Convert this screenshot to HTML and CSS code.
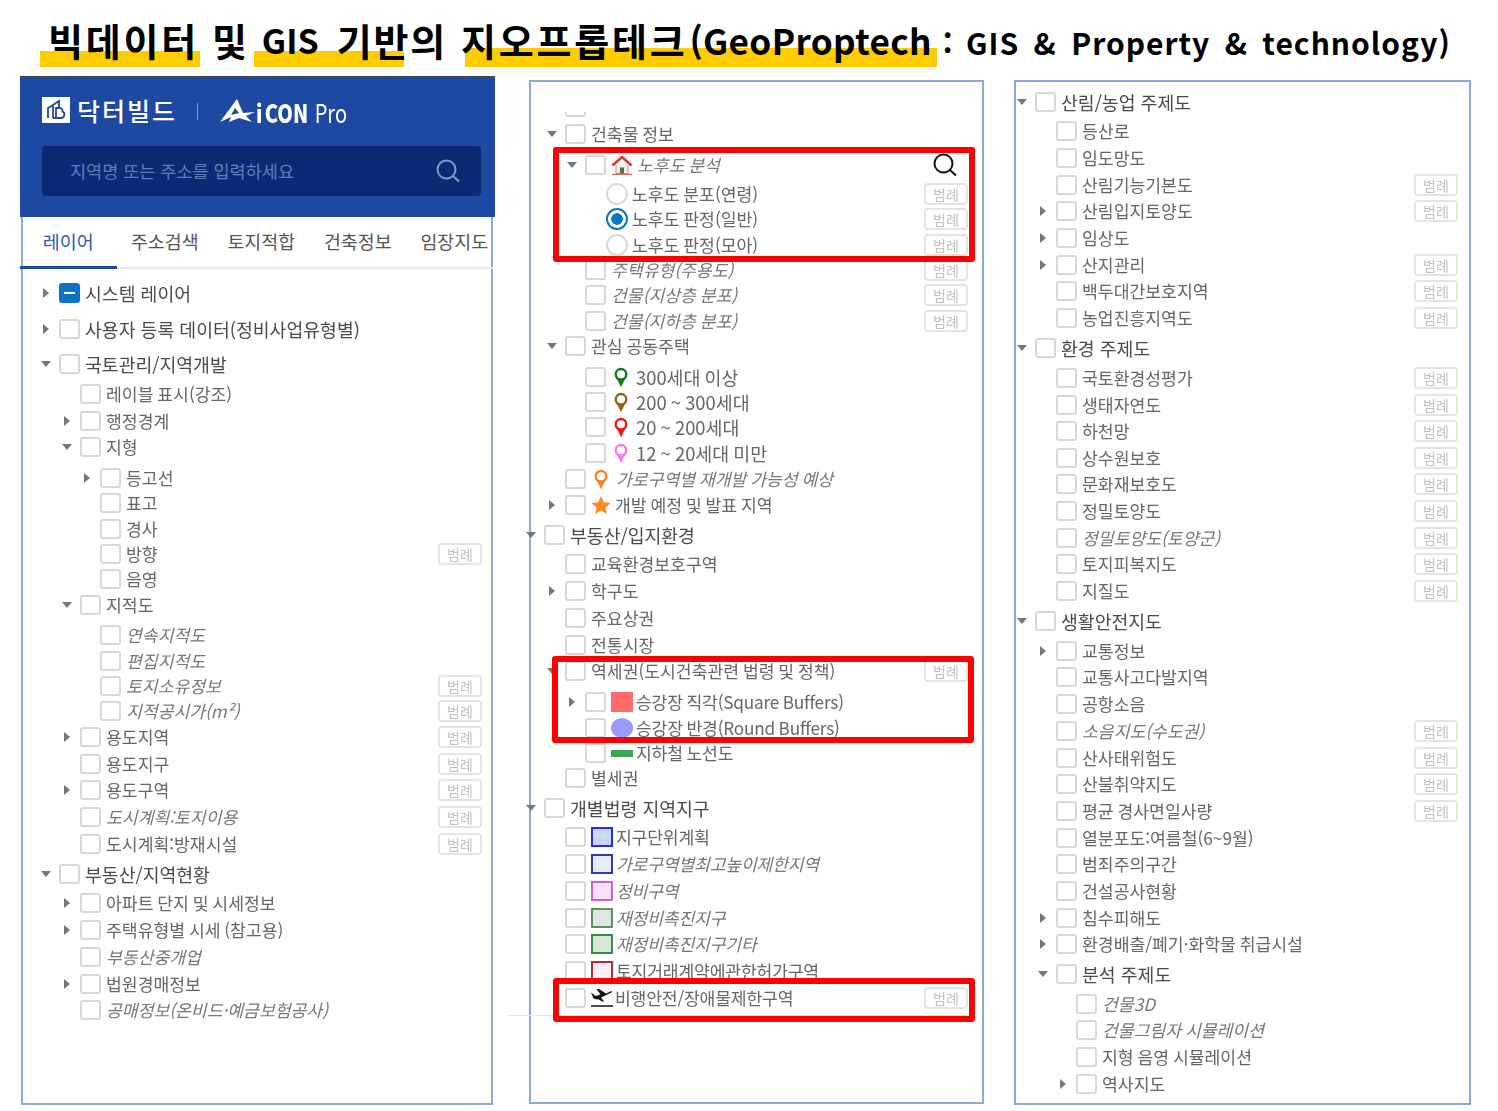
FILE: index.html
```html
<!DOCTYPE html>
<html lang="ko">
<head>
<meta charset="utf-8">
<title>지오프롭테크</title>
<link rel="stylesheet" href="styles.css">
</head>
<body>
<svg class="defs" width="0" height="0">
  <symbol id="pin" viewBox="0 0 18 26"><path d="M9 1a8 8 0 0 0-8 8c0 3.400 2 5.600 4 7.600L9 25l4-8.400c2-2 4-4.200 4-7.600a8 8 0 0 0-8-8z" fill="currentColor"/><circle cx="9" cy="9" r="5" fill="#fff"/></symbol>
  <symbol id="glass" viewBox="0 0 24 24"><circle cx="10.500" cy="10.500" r="9" fill="none" stroke="currentColor" stroke-width="2"/><path d="M17 17l6 5.500" fill="none" stroke="currentColor" stroke-width="2"/></symbol>
</svg>
<header class="title">
  <i class="mark mark-a"></i><i class="mark mark-b"></i><i class="mark mark-c"></i>
  <h1><span class="t1">빅데이터</span><span class="t2">및</span><span class="t3">GIS</span><span class="t4">기반의</span><span class="t5">지오프롭테크</span><span class="t6">(GeoProptech</span><span class="t7"><span class="colon">:</span> GIS &amp; Property &amp; technology)</span></h1>
</header>
<main class="panels">
  <section class="col col-left">
    <div class="brand">
      <div class="logos">
        <svg class="bi" viewBox="0 0 28 26" width="28" height="26"><rect width="28" height="26" fill="#fff"/><path d="M6 21V11l5-3V21M11 21V8l6-4v7M11 21h8a3.500 3.500 0 0 0 1.500-6.600A3 3 0 0 0 17 11h-3v10" fill="none" stroke="#1e49a3" stroke-width="1.800"/></svg>
        <span class="bname">닥터빌드</span>
        <i class="bsep"></i>
        <svg class="ai" viewBox="0 0 35 24" width="35" height="24"><path d="M0 23L17 0l6 14 12-1-9 4 6 6-13-4-10 4 2-5z" fill="#fff"/><path d="M15 9l-4 7 8-2z" fill="#1e49a3"/></svg>
        <span class="con"><b class="coni">i</b><b>CON</b><span>Pro</span></span>
      </div>
      <div class="search"><span>지역명 또는 주소를 입력하세요</span><svg width="24" height="24"><use href="#glass"/></svg></div>
    </div>
    <div class="frame frame-left">
      <nav class="tabs"><a class="on">레이어</a><a>주소검색</a><a>토지적합</a><a>건축정보</a><a>임장지도</a></nav>
      <div class="tree soft">
        <div class="row lv0 hd mn"><span class="slot"><i class="ar"></i></span><i class="cb minus"></i><span>시스템 레이어</span></div>
        <div class="row lv0 m10 hd"><span class="slot"><i class="ar"></i></span><i class="cb"></i><span>사용자 등록 데이터(정비사업유형별)</span></div>
        <div class="row lv0 m9 hd"><span class="slot"><i class="ad"></i></span><i class="cb"></i><span>국토관리/지역개발</span></div>
        <div class="row lv1 m4"><span class="slot"></span><i class="cb"></i><span>레이블 표시(강조)</span></div>
        <div class="row lv1 m1"><span class="slot"><i class="ar"></i></span><i class="cb"></i><span>행정경계</span></div>
        <div class="row lv1"><span class="slot"><i class="ad"></i></span><i class="cb"></i><span>지형</span></div>
        <div class="row lv2 m5"><span class="slot"><i class="ar"></i></span><i class="cb"></i><span>등고선</span></div>
        <div class="row lv2 mn"><span class="slot"></span><i class="cb"></i><span>표고</span></div>
        <div class="row lv2"><span class="slot"></span><i class="cb"></i><span>경사</span></div>
        <div class="row lv2 mn"><span class="slot"></span><i class="cb"></i><span>방향</span><em class="lg">범례</em></div>
        <div class="row lv2 mn"><span class="slot"></span><i class="cb"></i><span>음영</span></div>
        <div class="row lv1"><span class="slot"><i class="ad"></i></span><i class="cb"></i><span>지적도</span></div>
        <div class="row lv2 m4 it"><span class="slot"></span><i class="cb"></i><span>연속지적도</span></div>
        <div class="row lv2 it"><span class="slot"></span><i class="cb"></i><span>편집지적도</span></div>
        <div class="row lv2 mn it"><span class="slot"></span><i class="cb"></i><span>토지소유정보</span><em class="lg">범례</em></div>
        <div class="row lv2 mn it"><span class="slot"></span><i class="cb"></i><span>지적공시가(m²)</span><em class="lg">범례</em></div>
        <div class="row lv1"><span class="slot"><i class="ar"></i></span><i class="cb"></i><span>용도지역</span><em class="lg">범례</em></div>
        <div class="row lv1 m1"><span class="slot"></span><i class="cb"></i><span>용도지구</span><em class="lg">범례</em></div>
        <div class="row lv1"><span class="slot"><i class="ar"></i></span><i class="cb"></i><span>용도구역</span><em class="lg">범례</em></div>
        <div class="row lv1 m1 it"><span class="slot"></span><i class="cb"></i><span>도시계획:토지이용</span><em class="lg">범례</em></div>
        <div class="row lv1 m1"><span class="slot"></span><i class="cb"></i><span>도시계획:방재시설</span><em class="lg">범례</em></div>
        <div class="row lv0 m4 hd"><span class="slot"><i class="ad"></i></span><i class="cb"></i><span>부동산/지역현황</span></div>
        <div class="row lv1 m3"><span class="slot"><i class="ar"></i></span><i class="cb"></i><span>아파트 단지 및 시세정보</span></div>
        <div class="row lv1 m1"><span class="slot"><i class="ar"></i></span><i class="cb"></i><span>주택유형별 시세 (참고용)</span></div>
        <div class="row lv1 m1 it"><span class="slot"></span><i class="cb"></i><span>부동산중개업</span></div>
        <div class="row lv1 m1"><span class="slot"><i class="ar"></i></span><i class="cb"></i><span>법원경매정보</span></div>
        <div class="row lv1 it"><span class="slot"></span><i class="cb"></i><span>공매정보(온비드·예금보험공사)</span></div>
      </div>
    </div>
  </section>

  <section class="col col-mid">
    <div class="frame frame-mid">
      <div class="tree tree-mid soft">
        <div class="cutoff"></div>
        <div class="row lv1"><span class="slot"><i class="ad"></i></span><i class="cb"></i><span>건축물 정보</span></div>
        <div class="row lv2 m5 it"><span class="slot"><i class="ad"></i></span><i class="cb"></i><svg class="ico" viewBox="0 0 22 20" width="22" height="20"><path d="M5 10v8.500h12V10" fill="#f6f1e8" stroke="#b5a48c"/><path d="M9 12.500h4v6H9z" fill="#666"/><path d="M1.500 10.500L11 2l9.500 8.500" fill="none" stroke="#d9392b" stroke-width="2.500"/><path d="M1 19.300h20" stroke="#c94a3a"/></svg><span>노후도 분석</span><svg class="glass" width="24" height="24"><use href="#glass"/></svg></div>
        <div class="row lv3 m3"><i class="rd"></i><span>노후도 분포(연령)</span><em class="lg">범례</em></div>
        <div class="row lv3 mn"><i class="rd sel"></i><span>노후도 판정(일반)</span><em class="lg">범례</em></div>
        <div class="row lv3"><i class="rd"></i><span>노후도 판정(모아)</span><em class="lg">범례</em></div>
        <div class="row lv2 mn it"><span class="slot"></span><i class="cb"></i><span>주택유형(주용도)</span><em class="lg">범례</em></div>
        <div class="row lv2 mn it"><span class="slot"></span><i class="cb"></i><span>건물(지상층 분포)</span><em class="lg">범례</em></div>
        <div class="row lv2 it"><span class="slot"></span><i class="cb"></i><span>건물(지하층 분포)</span><em class="lg">범례</em></div>
        <div class="row lv1 mn"><span class="slot"><i class="ad"></i></span><i class="cb"></i><span>관심 공동주택</span></div>
        <div class="row lv2 m5"><span class="slot"></span><i class="cb"></i><svg class="pin c-green"><use href="#pin"/></svg><span>300세대 이상</span></div>
        <div class="row lv2 mn"><span class="slot"></span><i class="cb"></i><svg class="pin c-brown"><use href="#pin"/></svg><span>200 ~ 300세대</span></div>
        <div class="row lv2 mn"><span class="slot"></span><i class="cb"></i><svg class="pin c-red"><use href="#pin"/></svg><span>20 ~ 200세대</span></div>
        <div class="row lv2"><span class="slot"></span><i class="cb"></i><svg class="pin c-pink"><use href="#pin"/></svg><span>12 ~ 20세대 미만</span></div>
        <div class="row lv1 it"><span class="slot"></span><i class="cb"></i><svg class="pin c-orange"><use href="#pin"/></svg><span>가로구역별 재개발 가능성 예상</span></div>
        <div class="row lv1"><span class="slot"><i class="ar"></i></span><i class="cb"></i><svg class="ico" viewBox="0 0 20 20" width="20" height="20"><path d="M10 1l2.800 6.200 6.700.700-5 4.500 1.400 6.600L10 15.600 4.100 19l1.400-6.600-5-4.500 6.700-.700z" fill="#ff8a1e"/></svg><span>개발 예정 및 발표 지역</span></div>
        <div class="row lv0 m4 hd"><span class="slot"><i class="ad"></i></span><i class="cb"></i><span>부동산/입지환경</span></div>
        <div class="row lv1 m3"><span class="slot"></span><i class="cb"></i><span>교육환경보호구역</span></div>
        <div class="row lv1 m1"><span class="slot"><i class="ar"></i></span><i class="cb"></i><span>학구도</span></div>
        <div class="row lv1 m1"><span class="slot"></span><i class="cb"></i><span>주요상권</span></div>
        <div class="row lv1 m1"><span class="slot"></span><i class="cb"></i><span>전통시장</span></div>
        <div class="row lv1"><span class="slot"><i class="ad"></i></span><i class="cb"></i><span>역세권(도시건축관련 법령 및 정책)</span><em class="lg">범례</em></div>
        <div class="row lv2 m5 tight"><span class="slot"><i class="ar"></i></span><i class="cb"></i><i class="sw sw-red"></i><span>승강장 직각(Square Buffers)</span></div>
        <div class="row lv2 tight"><span class="slot"></span><i class="cb"></i><i class="sw sw-round"></i><span>승강장 반경(Round Buffers)</span></div>
        <div class="row lv2 mn tight"><span class="slot"></span><i class="cb"></i><i class="sw sw-bar"></i><span>지하철 노선도</span></div>
        <div class="row lv1 mn"><span class="slot"></span><i class="cb"></i><span>별세권</span></div>
        <div class="row lv0 m4 hd"><span class="slot"><i class="ad"></i></span><i class="cb"></i><span>개별법령 지역지구</span></div>
        <div class="row lv1 m3 tight"><span class="slot"></span><i class="cb"></i><i class="sw sw-1"></i><span>지구단위계획</span></div>
        <div class="row lv1 m1 tight it"><span class="slot"></span><i class="cb"></i><i class="sw sw-2"></i><span>가로구역별최고높이제한지역</span></div>
        <div class="row lv1 m1 tight it"><span class="slot"></span><i class="cb"></i><i class="sw sw-3"></i><span>정비구역</span></div>
        <div class="row lv1 m1 tight it"><span class="slot"></span><i class="cb"></i><i class="sw sw-4"></i><span>재정비촉진지구</span></div>
        <div class="row lv1 tight it"><span class="slot"></span><i class="cb"></i><i class="sw sw-5"></i><span>재정비촉진지구기타</span></div>
        <div class="row lv1 m1 tight"><span class="slot"></span><i class="cb"></i><i class="sw sw-6"></i><span>토지거래계약에관한허가구역</span></div>
        <div class="row lv1 m1 tight"><span class="slot"></span><i class="cb"></i><svg class="ico" viewBox="0 0 22 20" width="22" height="20"><path d="M0 4.500l4.500 3.500 5-1.500-4-5.500h2.500l7 4.500 5-2.200c1-.400 1.800.400.500 1.300L6 11.500 2.500 10.500zM10 9.500l3 4h-2l-4-2.500z" fill="#111"/><path d="M0 18h22" stroke="#111" stroke-width="1.500"/></svg><span>비행안전/장애물제한구역</span><em class="lg">범례</em></div>
      </div>
      <i class="divider"></i>
      <i class="redbox box-a"></i><i class="redbox box-b"></i><i class="redbox box-c"></i>
    </div>
  </section>

  <section class="col col-right">
    <div class="frame frame-right">
      <div class="tree soft">
        <div class="row lv0 hd"><span class="slot"><i class="ad"></i></span><i class="cb"></i><span>산림/농업 주제도</span></div>
        <div class="row lv1 m3"><span class="slot"></span><i class="cb"></i><span>등산로</span></div>
        <div class="row lv1 m1"><span class="slot"></span><i class="cb"></i><span>임도망도</span></div>
        <div class="row lv1 m1"><span class="slot"></span><i class="cb"></i><span>산림기능기본도</span><em class="lg">범례</em></div>
        <div class="row lv1"><span class="slot"><i class="ar"></i></span><i class="cb"></i><span>산림입지토양도</span><em class="lg">범례</em></div>
        <div class="row lv1 m1"><span class="slot"><i class="ar"></i></span><i class="cb"></i><span>임상도</span></div>
        <div class="row lv1 m1"><span class="slot"><i class="ar"></i></span><i class="cb"></i><span>산지관리</span><em class="lg">범례</em></div>
        <div class="row lv1"><span class="slot"></span><i class="cb"></i><span>백두대간보호지역</span><em class="lg">범례</em></div>
        <div class="row lv1 m1"><span class="slot"></span><i class="cb"></i><span>농업진흥지역도</span><em class="lg">범례</em></div>
        <div class="row lv0 m4 hd"><span class="slot"><i class="ad"></i></span><i class="cb"></i><span>환경 주제도</span></div>
        <div class="row lv1 m4"><span class="slot"></span><i class="cb"></i><span>국토환경성평가</span><em class="lg">범례</em></div>
        <div class="row lv1 m1"><span class="slot"></span><i class="cb"></i><span>생태자연도</span><em class="lg">범례</em></div>
        <div class="row lv1"><span class="slot"></span><i class="cb"></i><span>하천망</span><em class="lg">범례</em></div>
        <div class="row lv1 m1"><span class="slot"></span><i class="cb"></i><span>상수원보호</span><em class="lg">범례</em></div>
        <div class="row lv1"><span class="slot"></span><i class="cb"></i><span>문화재보호도</span><em class="lg">범례</em></div>
        <div class="row lv1 m1"><span class="slot"></span><i class="cb"></i><span>정밀토양도</span><em class="lg">범례</em></div>
        <div class="row lv1 m1 it"><span class="slot"></span><i class="cb"></i><span>정밀토양도(토양군)</span><em class="lg">범례</em></div>
        <div class="row lv1"><span class="slot"></span><i class="cb"></i><span>토지피복지도</span><em class="lg">범례</em></div>
        <div class="row lv1 m1"><span class="slot"></span><i class="cb"></i><span>지질도</span><em class="lg">범례</em></div>
        <div class="row lv0 m4 hd"><span class="slot"><i class="ad"></i></span><i class="cb"></i><span>생활안전지도</span></div>
        <div class="row lv1 m4"><span class="slot"><i class="ar"></i></span><i class="cb"></i><span>교통정보</span></div>
        <div class="row lv1"><span class="slot"></span><i class="cb"></i><span>교통사고다발지역</span></div>
        <div class="row lv1 m1"><span class="slot"></span><i class="cb"></i><span>공항소음</span></div>
        <div class="row lv1 m1 it"><span class="slot"></span><i class="cb"></i><span>소음지도(수도권)</span><em class="lg">범례</em></div>
        <div class="row lv1 m1"><span class="slot"></span><i class="cb"></i><span>산사태위험도</span><em class="lg">범례</em></div>
        <div class="row lv1"><span class="slot"></span><i class="cb"></i><span>산불취약지도</span><em class="lg">범례</em></div>
        <div class="row lv1 m1"><span class="slot"></span><i class="cb"></i><span>평균 경사면일사량</span><em class="lg">범례</em></div>
        <div class="row lv1 m1"><span class="slot"></span><i class="cb"></i><span>열분포도:여름철(6~9월)</span></div>
        <div class="row lv1"><span class="slot"></span><i class="cb"></i><span>범죄주의구간</span></div>
        <div class="row lv1 m1"><span class="slot"></span><i class="cb"></i><span>건설공사현황</span></div>
        <div class="row lv1 m1"><span class="slot"><i class="ar"></i></span><i class="cb"></i><span>침수피해도</span></div>
        <div class="row lv1"><span class="slot"><i class="ar"></i></span><i class="cb"></i><span>환경배출/폐기·화학물 취급시설</span></div>
        <div class="row lv1 m4 hd"><span class="slot"><i class="ad"></i></span><i class="cb"></i><span>분석 주제도</span></div>
        <div class="row lv2 m4 it"><span class="slot"></span><i class="cb"></i><span>건물3D</span></div>
        <div class="row lv2 it"><span class="slot"></span><i class="cb"></i><span>건물그림자 시뮬레이션</span></div>
        <div class="row lv2 m1"><span class="slot"></span><i class="cb"></i><span>지형 음영 시뮬레이션</span></div>
        <div class="row lv2 m1"><span class="slot"><i class="ar"></i></span><i class="cb"></i><span>역사지도</span></div>
      </div>
    </div>
  </section>
</main>
</body>
</html>
```

FILE: styles.css
```css
* { box-sizing: border-box; }
html, body { margin: 0; padding: 0; background: #fff; }
body { width: 1498px; height: 1111px; overflow: hidden; font-family: "Noto Sans CJK KR", "Noto Sans", sans-serif; color: #666; }
.defs { position: absolute; }
i, em { font-style: normal; display: block; }

/* Title */
.title { position: relative; height: 76px; }
.title h1 { position: relative; display: flex; margin: 0; padding: 0 0 0 48px; height: 76px; line-height: 80px; font-size: 38px; font-weight: 700; color: #000; white-space: pre; letter-spacing: 2.800px; }
.t2 { margin-left: 13px; }
.t3 { margin-left: 12px; font-size: 34px; letter-spacing: 0; }
.t4 { margin-left: 18px; letter-spacing: 1.800px; }
.t5 { margin-left: 14px; }
.t6 { margin-left: 2px; font-size: 35.200px; letter-spacing: .3px; }
.t7 { margin: 2px 0 0 11px; font-size: 30px; font-weight: 600; letter-spacing: 1px; word-spacing: 5px; }
.colon { display: inline-block; margin-right: -2px; }
.mark { position: absolute; background: #ffcc00; }
.mark-a { left: 40px; top: 51px; width: 160px; height: 16px; }
.mark-b { left: 254px; top: 51px; width: 150px; height: 16px; }
.mark-c { left: 465px; top: 48px; width: 472px; height: 19px; }

/* Columns */
.panels { display: flex; height: 1035px; padding-left: 20px; }
.col { display: flex; flex-direction: column; flex: none; }
.col-left { width: 475px; }
.col-mid { width: 455px; margin-left: 34px; padding-top: 4px; height: 1028px; }
.col-right { width: 457px; margin-left: 30px; padding-top: 4px; height: 1029px; }
.frame { position: relative; flex: 1; border: 2px solid #8fa9d6; background: #fff; }

/* Brand header */
.brand { height: 141px; background: #1e49a3; border-top: 2px solid #45494f; padding: 19px 14px 0 22px; }
.logos { display: flex; align-items: center; height: 26px; color: #fff; }
.bname { margin-left: 7px; font-size: 25px; font-weight: 500; letter-spacing: 2px; line-height: 26px; }
.bsep { width: 1px; height: 17px; margin: 2px 0 0 20px; background: #7e9ad0; }
.ai { flex: none; margin: 1px 0 0 22px; }
.con { display: flex; margin: 3px 0 0 1px; font-size: 25px; line-height: 26px; transform: scaleX(.8); transform-origin: left center; white-space: nowrap; }
.con b { font-weight: 800; }
.coni { margin-right: 3px; }
.con span { margin-left: 8px; font-weight: 400; }
.search { display: flex; align-items: center; justify-content: space-between; height: 50px; margin-top: 23px; padding: 0 21px 0 28px; background: #0a2b74; border-radius: 4px; color: #5d7fb9; font-size: 17.500px; }
.search span { margin-top: -2px; }
.search svg { color: #7f9cc8; }

/* Tabs */
.frame-left { margin: 0 2px 0 1px; height: 888px; flex: none; border-top: 0; }
.tabs { display: flex; height: 52px; margin: 0 -3px; border-bottom: 2px solid #e3e8ee; }
.tabs a { flex: none; width: 96.500px; height: 52px; padding-top: 11px; text-align: center; font-size: 18.400px; line-height: 27px; color: #555; white-space: nowrap; }
.tabs a.on { color: #2f5bb0; border-bottom: 3px solid #1e49a3; }

/* Trees */
.tree { padding: 12px 9px 0 15px; }
.frame-mid .tree { padding: 30px 14px 0 0; margin-left: -8px; }
.frame-right .tree { padding: 7px 11px 0 0; margin-left: -2px; }
.soft { filter: blur(.45px); }
.row { display: flex; align-items: center; gap: 5px; height: 26px; font-size: 17.200px; line-height: 26px; white-space: nowrap; word-spacing: -1px; }
.hd { color: #4a4a4a; font-size: 18.300px; word-spacing: 0; }
.it > span:not(.slot) { font-style: italic; color: #777; }
.lv2 > .pin + span { font-size: 18.400px; }
.lv0 { padding-left: 0; }
.lv1 { padding-left: 21px; }
.lv2 { padding-left: 41px; }
.lv3 { padding-left: 83px; }
.mn { margin-top: -1px; }
.m1 { margin-top: 1px; }
.m3 { margin-top: 3px; }
.m4 { margin-top: 4px; }
.m5 { margin-top: 5px; }
.m9 { margin-top: 9px; }
.m10 { margin-top: 10px; }
.slot { flex: none; width: 21px; height: 20px; margin-right: -5px; display: flex; align-items: center; justify-content: flex-end; }
.ar { width: 0; height: 0; margin-right: 10px; border-left: 6px solid #777; border-top: 5px solid transparent; border-bottom: 5px solid transparent; }
.ad { width: 0; height: 0; margin-right: 8px; border-top: 6px solid #777; border-left: 5px solid transparent; border-right: 5px solid transparent; }
.cb { flex: none; width: 21px; height: 20px; border: 2px solid #d3d9df; border-radius: 3px; background: #fff; }
.cb.minus { position: relative; background: #0b74c4; border-color: #0b74c4; }
.cb.minus::after { content: ""; position: absolute; left: 3px; right: 3px; top: 7px; height: 2px; background: #fff; }
.rd { flex: none; width: 22px; height: 22px; margin-right: -1px; border: 2px solid #d6dbe0; border-radius: 50%; background: #fff; }
.rd.sel { border-color: #0b74c4; background: radial-gradient(circle, #0b74c4 0 5.500px, #fff 6px); }
.lg { flex: none; width: 44px; height: 22px; margin-left: auto; border: 2px solid #e2e5e8; border-radius: 4px; background: #fff; text-align: center; font-size: 14px; line-height: 18px; color: #c2c2c2; }
.ico { flex: none; margin-right: -1px; }
.pin { flex: none; width: 16px; height: 21px; margin: 0 2px; }
.glass { margin-left: auto; margin-right: 11px; color: #111; }
.c-green { color: #137a1a; }
.c-brown { color: #8f6a14; }
.c-red { color: #f01414; }
.c-pink { color: #ff77ee; }
.c-orange { color: #ff7f1e; }
.tight { gap: 3px; }
.tight .slot { margin-right: -3px; }
.tight .cb { margin-right: 2px; }
.tight > span:not(.slot) { letter-spacing: -.2px; }
.sw { flex: none; width: 22px; height: 20px; }
.sw-red { background: #ff6b6b; }
.sw-round { background: #9999ff; border-radius: 50%; }
.sw-bar { height: 7px; background: #3aa655; }
.sw-1 { border: 2px solid #2a2aee; background: #ccd6f8; }
.sw-2 { border: 2px solid #3838a8; background: #e4eefc; }
.sw-3 { border: 2px solid #d060d0; background: #f8e0f8; }
.sw-4 { border: 2px solid #5f8f5f; background: #dfe6df; }
.sw-5 { border: 2px solid #2f8f3f; background: #d8e8d8; }
.sw-6 { border: 2px solid #b03030; background: #fdeefd; }
.cutoff { width: 21px; height: 5px; margin: 0 0 4px 42px; border: 2px solid #d3d9df; border-top: 0; border-radius: 0 0 3px 3px; }

/* Overlays on the middle panel (frame inner origin: 531,82) */
.divider { position: absolute; left: -23px; top: 933px; width: 467px; height: 1px; background: #e3e5e8; }
.redbox { position: absolute; border: 6px solid #ff0000; border-radius: 3px; }
.box-a { left: 22px; top: 65px; width: 422px; height: 115px; }
.box-b { left: 21px; top: 574px; width: 422px; height: 87px; }
.box-c { left: 22px; top: 896px; width: 422px; height: 44px; }
```
